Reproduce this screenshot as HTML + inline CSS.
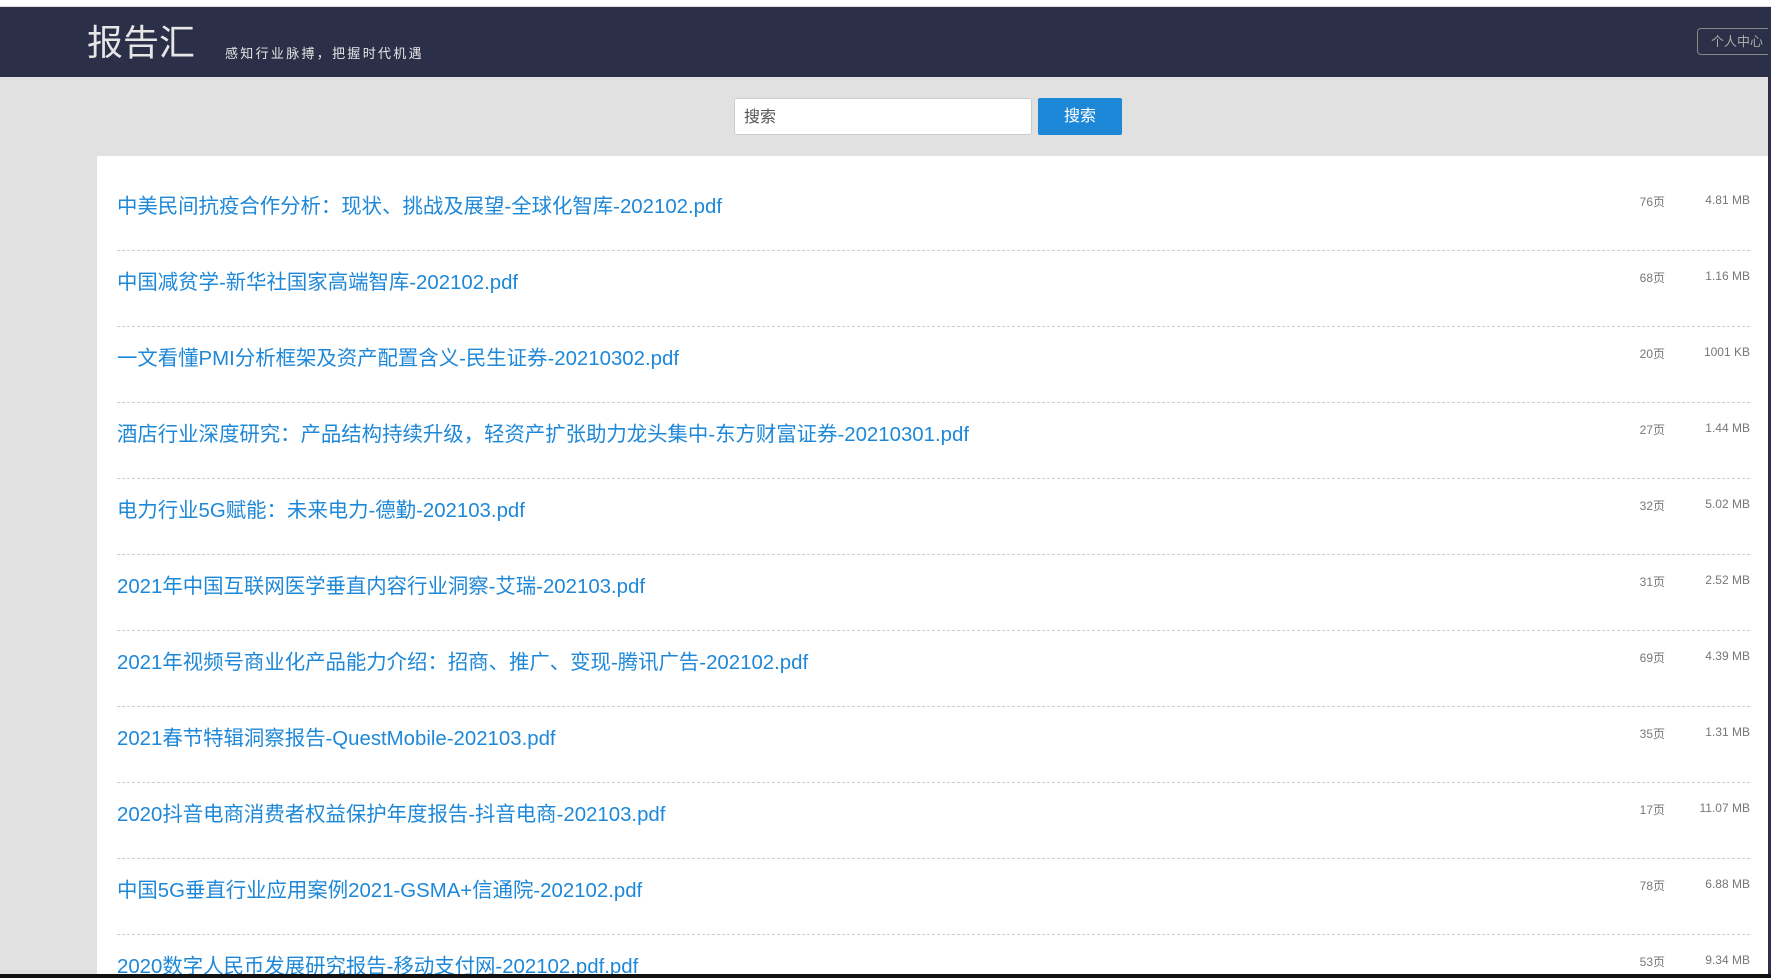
<!DOCTYPE html>
<html><head><meta charset="utf-8"><style>
*{margin:0;padding:0;box-sizing:border-box}
html{width:1771px;height:978px;overflow:hidden}
body{width:1771px;height:978px;overflow:hidden;background:#e1e1e1;font-family:"Liberation Sans","Noto Sans CJK SC",sans-serif;position:relative}
.top{height:7px;background:#fff;border-bottom:1px solid #ddd}
.hd{position:absolute;top:7px;left:0;width:1771px;height:70px;background:#2b2f48}
.logo{position:absolute;left:87px;top:15px;font-size:36px;color:#e6e6e6;line-height:42px}
.slogan{position:absolute;left:225px;top:36px;font-size:13px;color:#e6e6e6;letter-spacing:2.3px}
.btn{position:absolute;left:1697px;top:21px;width:90px;height:27px;border:1px solid #888;border-radius:4px;color:#aaa;font-size:13px;line-height:25px;padding-left:13px}
.sin{position:absolute;left:734px;top:98px;width:298px;height:37px;background:#fff;border:1px solid #ccc;border-radius:3px;font-size:16px;color:#555;line-height:37px;padding-left:9px}
.sbt{position:absolute;left:1038px;top:98px;width:84px;height:37px;background:#1e88d8;border-radius:2px;color:#fff;font-size:16px;line-height:38px;text-align:center}
.panel{position:absolute;left:97px;top:156px;width:1672px;height:819px;overflow:hidden;background:#fff;padding-top:19px}
.row{margin:0 19px 0 20px;height:76px;border-bottom:1px dashed #ccc;position:relative}
.t{position:absolute;left:0;top:20px;font-size:20.4px;color:#1e88d8;line-height:24px;white-space:nowrap}
.p{position:absolute;right:85px;top:18px;font-size:12px;color:#777}
.s{position:absolute;right:0;top:18px;font-size:12px;color:#777}
.rb{position:absolute;right:0;top:7px;width:3px;height:971px;background:#2b2f48}
.bb{position:absolute;left:0;top:974px;width:1771px;height:4px;background:#111}
</style></head><body>
<div class="top"></div>
<div class="hd"><div class="logo">报告汇</div><div class="slogan">感知行业脉搏，把握时代机遇</div><div class="btn">个人中心</div></div>
<div class="sin">搜索</div><div class="sbt">搜索</div>
<div class="panel">
<div class="row"><div class="t">中美民间抗疫合作分析：现状、挑战及展望-全球化智库-202102.pdf</div><div class="p">76页</div><div class="s">4.81 MB</div></div>
<div class="row"><div class="t">中国减贫学-新华社国家高端智库-202102.pdf</div><div class="p">68页</div><div class="s">1.16 MB</div></div>
<div class="row"><div class="t">一文看懂PMI分析框架及资产配置含义-民生证券-20210302.pdf</div><div class="p">20页</div><div class="s">1001 KB</div></div>
<div class="row"><div class="t">酒店行业深度研究：产品结构持续升级，轻资产扩张助力龙头集中-东方财富证券-20210301.pdf</div><div class="p">27页</div><div class="s">1.44 MB</div></div>
<div class="row"><div class="t">电力行业5G赋能：未来电力-德勤-202103.pdf</div><div class="p">32页</div><div class="s">5.02 MB</div></div>
<div class="row"><div class="t">2021年中国互联网医学垂直内容行业洞察-艾瑞-202103.pdf</div><div class="p">31页</div><div class="s">2.52 MB</div></div>
<div class="row"><div class="t">2021年视频号商业化产品能力介绍：招商、推广、变现-腾讯广告-202102.pdf</div><div class="p">69页</div><div class="s">4.39 MB</div></div>
<div class="row"><div class="t">2021春节特辑洞察报告-QuestMobile-202103.pdf</div><div class="p">35页</div><div class="s">1.31 MB</div></div>
<div class="row"><div class="t">2020抖音电商消费者权益保护年度报告-抖音电商-202103.pdf</div><div class="p">17页</div><div class="s">11.07 MB</div></div>
<div class="row"><div class="t">中国5G垂直行业应用案例2021-GSMA+信通院-202102.pdf</div><div class="p">78页</div><div class="s">6.88 MB</div></div>
<div class="row"><div class="t">2020数字人民币发展研究报告-移动支付网-202102.pdf.pdf</div><div class="p">53页</div><div class="s">9.34 MB</div></div>
</div>
<div class="rb"></div><div class="bb"></div>
</body></html>
